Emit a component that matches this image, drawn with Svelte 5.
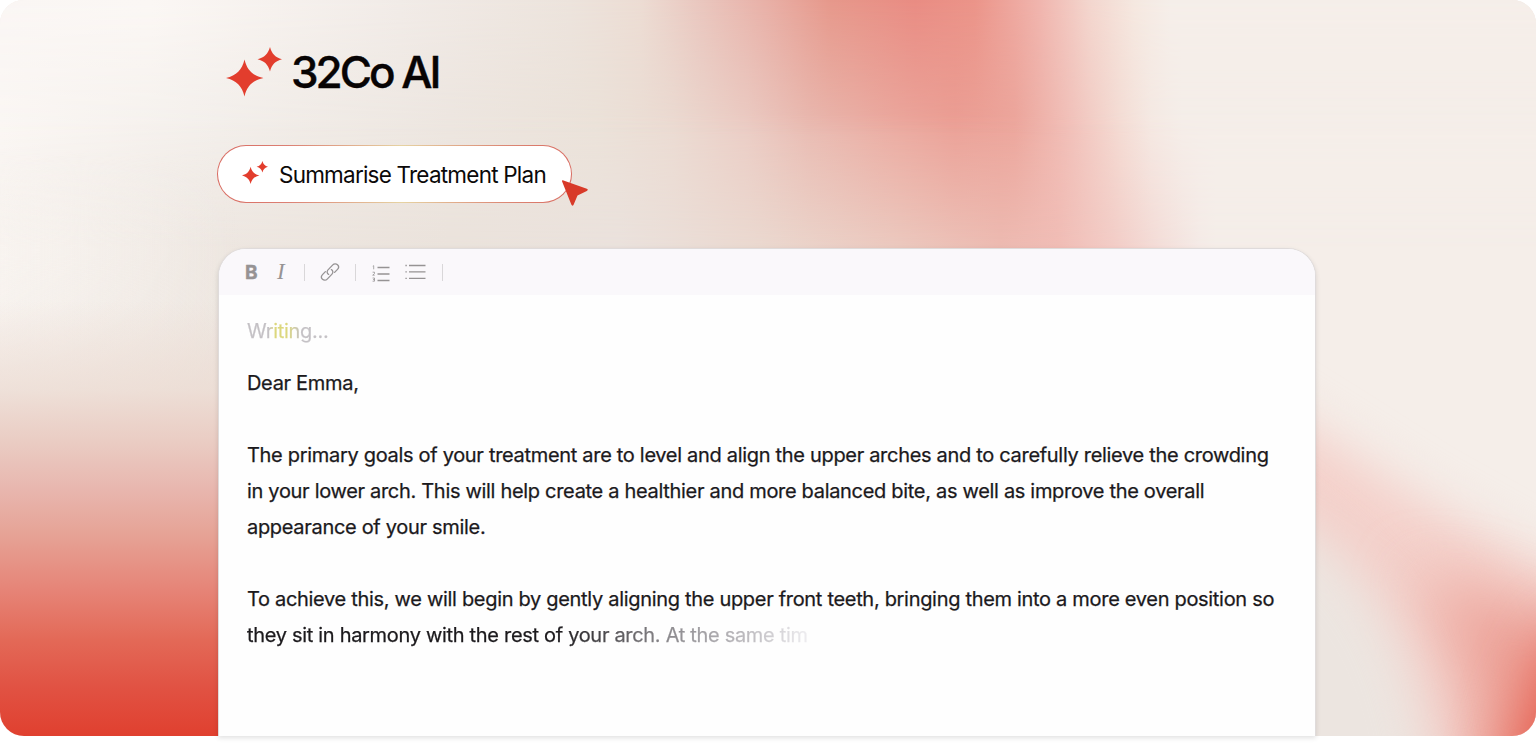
<script>
    const paragraphs = [
        ["Dear Emma,"],
        [
            "The primary goals of your treatment are to level and align the upper arches and to carefully relieve the crowding",
            "in your lower arch. This will help create a healthier and more balanced bite, as well as improve the overall",
            "appearance of your smile.",
        ],
        [
            "To achieve this, we will begin by gently aligning the upper front teeth, bringing them into a more even position so",
        ],
    ];
</script>

{#snippet sparkles(size)}
    <svg class="sparkles" width={size} height={size} viewBox="0 0 56 56">
        <path
            d="M18.500 12.500C21 23 26.500 28.500 37.500 31C26.500 33.500 21 39 18.500 49.500C16 39 10.500 33.500 0 31C10.500 28.500 16 23 18.500 12.500Z"
        />
        <path
            d="M44 0C45.800 7 49.500 10.500 56 12.300C49.500 14 45.800 17.500 44 24.500C42 17.500 38.500 14 31.500 12.300C38.500 10.500 42 7 44 0Z"
        />
    </svg>
{/snippet}

<main class="hero">
    <div class="glow">
        <div class="band low"></div>
        <div class="band mid"></div>
        <div class="band top"></div>
        <div class="ember pale"></div>
        <div class="ember"></div>
        <svg class="swoosh" width="236" height="488" viewBox="1300 248 236 488">
            <defs>
                <filter
                    id="soft"
                    x="-50%"
                    y="-50%"
                    width="200%"
                    height="200%"
                    color-interpolation-filters="sRGB"
                >
                    <feGaussianBlur stdDeviation="24" />
                </filter>
                <filter
                    id="softer"
                    x="-80%"
                    y="-80%"
                    width="260%"
                    height="260%"
                    color-interpolation-filters="sRGB"
                >
                    <feGaussianBlur stdDeviation="32" />
                </filter>
            </defs>
            <rect x="1300" y="248" width="236" height="488" fill="#f5eee9" />
            <path
                filter="url(#soft)"
                fill="#f4d1cb"
                d="M1200 360L1316 432L1420 498L1536 562L1640 610V860H1200Z"
            />
            <path
                filter="url(#softer)"
                fill="#eca096"
                d="M1410 575L1480 592L1640 650V860H1470Q1500 670 1410 575Z"
            />
            <path
                filter="url(#soft)"
                fill="#ece5e0"
                d="M1200 440L1316 535Q1436 620 1440 860H1200Z"
            />
            <path
                filter="url(#softer)"
                fill="#e4503f"
                d="M1570 630L1700 640V860H1500Q1512 730 1570 630Z"
            />
        </svg>
    </div>

    <div class="content">
        <h1 class="brand">
            {@render sparkles(56)}
            <span>32Co AI</span>
        </h1>

        <button class="summarise">
            {@render sparkles(26)}
            <span>Summarise Treatment Plan</span>
            <svg class="cursor" width="28" height="28" viewBox="0 0 28 28">
                <path
                    d="M1.800 1.200L25.800 9.800Q27.800 10.800 25.800 12L16.500 16.500L12.600 25.800Q11.400 27.700 10.300 25.600L1 2.200Q.9 1 1.800 1.200Z"
                />
            </svg>
        </button>

        <section class="editor">
            <div class="toolbar">
                <b>B</b>
                <i>I</i>
                <span class="divider"></span>
                <svg class="link" width="20" height="20" viewBox="0 0 20 20">
                    <path
                        d="M8.600 12.400C7 11.600 6.600 9.300 8 7.900L12.800 2.900C14.100 1.500 16.100 1.400 17.500 2.700S18.800 6 17.500 7.400L14.600 10.400"
                    />
                    <path
                        d="M11.400 7.600C13 8.400 13.400 10.700 12 12.100L7.200 17.100C5.900 18.500 3.900 18.600 2.500 17.300S1.200 14 2.500 12.600L5.400 9.600"
                    />
                </svg>
                <span class="divider"></span>
                <svg class="numbered" width="18" height="17" viewBox="0 0 18 17">
                    <path d="M5.500 2.500H17.500M5.500 9H17.500M5.500 15.500H17.500" />
                    <path
                        class="numbers"
                        d="M.8 1.200L1.700.7V4.300M.6 7.200H2.500V8.600L.7 10.200H2.700M.6 13H2.500V16.200H.6M1 14.600H2.500"
                    />
                </svg>
                <svg class="bullets" width="21" height="17" viewBox="0 0 21 17">
                    <path
                        d="M4 1.500H20.500M4 7.900H20.500M4 14.400H20.500M.4 1.500H1.800M.4 7.900H1.800M.4 14.400H1.800"
                    />
                </svg>
                <span class="divider"></span>
            </div>

            <div class="letter">
                <p class="status">Writing...</p>
                {#each paragraphs as lines, index}
                    <p>
                        {#each lines as line}
                            <span class="line">{line}</span>
                        {/each}
                        {#if index === paragraphs.length - 1}
                            <span class="line fading"
                                >they sit in harmony with the rest of your arch. At the same tim</span
                            >
                        {/if}
                    </p>
                {/each}
            </div>
        </section>
    </div>
</main>

<style>
    :global(body) {
        background: #fff;
        font-family: Inter, "Liberation Sans", sans-serif;
    }

    .hero {
        position: relative;
        height: 748px;
        overflow: hidden;
    }

    /* Background colour fields, everything here sits behind the content */
    .glow {
        position: absolute;
        inset: 0 0 12px;
        overflow: hidden;
        border-radius: 24px;
        background: #f5eee9;
    }
    .glow > * {
        position: absolute;
    }
    .band {
        top: 0;
        left: 0;
        width: 100%;
        height: 400px;
    }
    .band.low {
        height: 100%;
        background: linear-gradient(
            90deg,
            #f5f0ec 0,
            #eee7e1 218px,
            #ebe3dc 450px,
            #ebe2dd 620px,
            #ebd9d0 760px,
            #ecc9bf 900px,
            #edbbb2 1000px,
            #f1bdb6 1058px,
            #f3cdc7 1115px,
            #f4ddd8 1157px,
            #f5ebe7 1200px,
            #f5eee9 1216px
        );
    }
    .band.mid {
        background: linear-gradient(
            90deg,
            #fbf7f4 0,
            #f3efeb 218px,
            #ede6e0 450px,
            #ebe2d9 597px,
            #ebdbd2 672px,
            #ebccc4 747px,
            #e9bab1 809px,
            #eba99f 896px,
            #eb9f95 955px,
            #eca59b 1015px,
            #f1c0b9 1070px,
            #f4dcd4 1120px,
            #f5e9e3 1151px,
            #f5eee9 1182px
        );
        mask-image: linear-gradient(#000 115px, transparent 250px);
    }
    .band.top {
        background: linear-gradient(
            90deg,
            #faf6f4 0,
            #fbf7f4 150px,
            #f1ebe7 400px,
            #ece3dc 570px,
            #ecdcd3 640px,
            #e9c6be 700px,
            #e8b0a7 765px,
            #e6988b 830px,
            #e98c83 915px,
            #eb9489 975px,
            #f0b5ae 1040px,
            #f3d6ce 1090px,
            #f5e8e0 1135px,
            #f5eee9 1170px
        );
        mask-image: linear-gradient(#000, transparent 135px);
    }
    .ember {
        top: 300px;
        left: 0;
        width: 260px;
        height: 436px;
        background: linear-gradient(
            rgba(232, 200, 190, 0) 0,
            rgba(236, 219, 210, 0.75) 90px,
            #eacdc4 140px,
            #e8b6ae 190px,
            #e6a497 232px,
            #e68477 290px,
            #e36957 340px,
            #e15344 385px,
            #e0402f 436px
        );
    }
    .ember.pale {
        top: 150px;
        height: 300px;
        background: linear-gradient(90deg, rgba(250, 246, 242, 0.6), rgba(250, 246, 242, 0) 240px);
        mask-image: linear-gradient(transparent, #000 100px, transparent);
    }
    .swoosh {
        right: 0;
        bottom: 0;
    }

    .content {
        position: relative;
        display: flex;
        flex-direction: column;
        align-items: flex-start;
        height: 736px;
        padding: 44px 220px 0 218px;
        box-sizing: border-box;
    }

    .sparkles {
        flex: none;
        fill: #e23d2d;
    }

    .brand {
        display: flex;
        align-items: center;
        gap: 9px;
        height: 56px;
        margin: 0 0 45px 8px;
        color: #080404;
        font-size: 44px;
        font-weight: 550;
        letter-spacing: -3px;
        white-space: nowrap;
        -webkit-text-stroke: 0.4px #080404;
    }
    .brand span {
        margin-top: -1px;
    }
    .brand .sparkles {
        margin-top: 6px;
    }

    .summarise {
        position: relative;
        display: flex;
        align-items: center;
        gap: 11px;
        width: 355px;
        height: 58px;
        margin-left: -1px;
        padding: 0 0 0 24px;
        border: 1px solid transparent;
        border-radius: 29px;
        background:
            linear-gradient(#fff, #fff) padding-box,
            linear-gradient(90deg, #d96a60, #dc8074 20%, #e6d3a2 52%, #dc8a76 80%, #d96a60) border-box;
        color: #0b0909;
        font: 400 22.5px Inter, sans-serif;
        letter-spacing: -0.78px;
        white-space: nowrap;
    }
    .summarise span {
        margin-top: 1px;
    }
    .cursor {
        position: absolute;
        top: 33px;
        left: 343px;
        fill: #d83a29;
    }

    .editor {
        flex: 1;
        align-self: stretch;
        display: flex;
        flex-direction: column;
        margin-top: 45px;
        border: 1px solid #dfdbdb;
        border-width: 1px 1px 0;
        border-radius: 28px 28px 0 0;
        background: #fefefe;
        box-shadow: 0 2px 5px rgba(0, 0, 0, 0.12);
    }

    .toolbar {
        display: flex;
        align-items: center;
        height: 46px;
        padding-left: 26px;
        border-radius: 27px 27px 0 0;
        background: #faf8fb;
        color: #969394;
    }
    .toolbar svg {
        fill: none;
        stroke: #969394;
        stroke-width: 1.4;
    }
    .toolbar b {
        width: 32px;
        font-size: 19px;
        -webkit-text-stroke: 0.4px #969394;
    }
    .toolbar i {
        width: 27px;
        font: italic 23px "Liberation Serif", serif;
    }
    .divider {
        width: 1px;
        height: 17px;
        background: #d9d7d9;
    }
    .toolbar .link {
        margin: 0 15px;
        stroke-width: 1.3;
        stroke-linecap: round;
    }
    .toolbar .numbered {
        margin: 2px 15px 0 16px;
    }
    .toolbar .numbers {
        stroke-width: 0.8;
    }
    .toolbar .bullets {
        margin-right: 16px;
    }

    .letter {
        padding: 18px 28px 0;
        color: #1b191c;
        font-size: 20px;
        font-weight: 400;
        line-height: 36px;
        letter-spacing: -0.31px;
        white-space: nowrap;
        -webkit-text-stroke: 0.25px;
    }
    .letter p {
        margin: 0 0 36px;
    }
    .letter .status {
        width: max-content;
        margin-bottom: 16px;
        background: linear-gradient(90deg, #c4c1c5 27%, #dcd77d 34%, #dcd77d 50%, #c4c1c5 66%);
        background-clip: text;
        color: transparent;
    }
    .line {
        display: block;
    }
    .fading {
        width: max-content;
        background: linear-gradient(90deg, #1b191c 55%, #88868a 74%, #c0bec2 90%, #eeedf0);
        background-clip: text;
        color: transparent;
    }
</style>
